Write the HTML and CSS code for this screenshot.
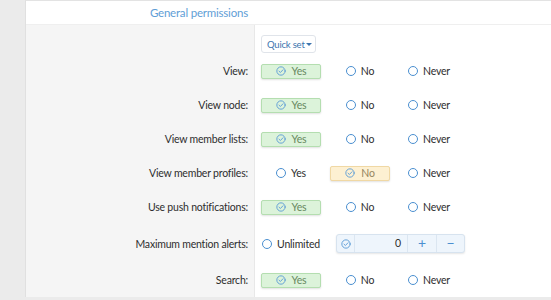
FILE: index.html
```html
<!DOCTYPE html>
<html lang="en">
<head>
  <meta charset="UTF-8" />
  <title>General permissions</title>
  <link rel="stylesheet" href="styles.css">
</head>
<body>

<div class="bloco">
  <!-- Cabeçalho do grupo -->
  <div class="cabecalho">
    <h3>General permissions</h3>
  </div>

  <!-- Quick set -->
  <div class="linha linha-quick">
    <div class="rotulo"></div>
    <div class="valor">
      <button class="btn-quick">Quick set<span class="seta"></span></button>
    </div>
  </div>

  <div class="linha">
    <div class="rotulo">View:</div>
    <div class="valor">
      <span class="opcao sim marcada"><svg class="ico-ok" viewBox="0 0 12 12"><circle cx="6" cy="6" r="5"/><path d="M3.6 6.2l1.7 1.6 3.1-3.3"/></svg>Yes</span>
      <span class="opcao"><i class="radio"></i>No</span>
      <span class="opcao"><i class="radio"></i>Never</span>
    </div>
  </div>

  <div class="linha">
    <div class="rotulo">View node:</div>
    <div class="valor">
      <span class="opcao sim marcada"><svg class="ico-ok" viewBox="0 0 12 12"><circle cx="6" cy="6" r="5"/><path d="M3.6 6.2l1.7 1.6 3.1-3.3"/></svg>Yes</span>
      <span class="opcao"><i class="radio"></i>No</span>
      <span class="opcao"><i class="radio"></i>Never</span>
    </div>
  </div>

  <div class="linha">
    <div class="rotulo">View member lists:</div>
    <div class="valor">
      <span class="opcao sim marcada"><svg class="ico-ok" viewBox="0 0 12 12"><circle cx="6" cy="6" r="5"/><path d="M3.6 6.2l1.7 1.6 3.1-3.3"/></svg>Yes</span>
      <span class="opcao"><i class="radio"></i>No</span>
      <span class="opcao"><i class="radio"></i>Never</span>
    </div>
  </div>

  <div class="linha">
    <div class="rotulo">View member profiles:</div>
    <div class="valor">
      <span class="opcao"><i class="radio"></i>Yes</span>
      <span class="opcao nao marcada"><svg class="ico-ok" viewBox="0 0 12 12"><circle cx="6" cy="6" r="5"/><path d="M3.6 6.2l1.7 1.6 3.1-3.3"/></svg>No</span>
      <span class="opcao"><i class="radio"></i>Never</span>
    </div>
  </div>

  <div class="linha">
    <div class="rotulo">Use push notifications:</div>
    <div class="valor">
      <span class="opcao sim marcada"><svg class="ico-ok" viewBox="0 0 12 12"><circle cx="6" cy="6" r="5"/><path d="M3.6 6.2l1.7 1.6 3.1-3.3"/></svg>Yes</span>
      <span class="opcao"><i class="radio"></i>No</span>
      <span class="opcao"><i class="radio"></i>Never</span>
    </div>
  </div>

  <div class="linha linha-alta">
    <div class="rotulo">Maximum mention alerts:</div>
    <div class="valor">
      <span class="opcao"><i class="radio"></i>Unlimited</span>
      <div class="grupo-numero">
        <span class="gn-ok"><svg class="ico-ok" viewBox="0 0 12 12"><circle cx="6" cy="6" r="5"/><path d="M3.6 6.2l1.7 1.6 3.1-3.3"/></svg></span>
        <span class="gn-valor">0</span>
        <span class="gn-btn">+</span>
        <span class="gn-btn gn-menos">&minus;</span>
      </div>
    </div>
  </div>

  <div class="linha">
    <div class="rotulo">Search:</div>
    <div class="valor">
      <span class="opcao sim marcada"><svg class="ico-ok" viewBox="0 0 12 12"><circle cx="6" cy="6" r="5"/><path d="M3.6 6.2l1.7 1.6 3.1-3.3"/></svg>Yes</span>
      <span class="opcao"><i class="radio"></i>No</span>
      <span class="opcao"><i class="radio"></i>Never</span>
    </div>
  </div>
</div>

</body>
</html>
```

FILE: styles.css
```css
/* Reset e fonte */
* {
  margin: 0;
  padding: 0;
  box-sizing: border-box;
}

body {
  background: #ebebeb;
  font-family: Lato, sans-serif;
  font-size: 10.5px;
  letter-spacing: -0.2px;
  color: #2e2e2e;
  overflow: hidden;
}

.bloco {
  margin-left: 25px;
  background: #fff;
  border-top: 1px solid #e3e3e3;
  border-left: 1px solid #e0e0e0;
}

/* Cabeçalho */
.cabecalho {
  display: flex;
  height: 24px;
  border-bottom: 1px solid #efefef;
}

.cabecalho h3 {
  width: 229px;
  text-align: right;
  padding-right: 7px;
  font-size: 11.5px;
  font-weight: normal;
  color: #5f9ed6;
  line-height: 23px;
}

/* Linhas do formulário */
.linha {
  display: flex;
  height: 34px;
}

.linha-quick {
  height: 29px;
}

.linha-alta {
  height: 39px;
}

.rotulo {
  width: 229px;
  flex-shrink: 0;
  background: #f5f5f5;
  border-right: 1px solid #e8e8e8;
  padding-right: 6px;
  display: flex;
  align-items: center;
  justify-content: flex-end;
  color: #2e2e2e;
}

.valor {
  display: flex;
  align-items: center;
  gap: 9px;
  padding-left: 6px;
}

.linha-quick .valor {
  align-items: flex-start;
  padding-top: 10px;
}

.btn-quick {
  background: #fff;
  border: 1px solid #e0e4ea;
  border-radius: 3px;
  height: 18px;
  padding: 0 3px 0 5px;
  font-family: Lato, sans-serif;
  font-size: 9.5px;
  letter-spacing: -0.2px;
  color: #3d74ae;
  display: flex;
  align-items: center;
}

.seta {
  display: inline-block;
  margin-left: 1px;
  border-left: 3px solid transparent;
  border-right: 3px solid transparent;
  border-top: 3.5px solid #3d74ae;
}

/* Opções de rádio */
.opcao {
  width: 60px;
  height: 15px;
  flex-shrink: 0;
  display: flex;
  align-items: center;
  justify-content: center;
  border: 1px solid transparent;
  border-radius: 2px;
}

.radio {
  display: inline-block;
  flex-shrink: 0;
  width: 10px;
  height: 10px;
  border: 1.2px solid #4a8fd0;
  border-radius: 50%;
  background: #fff;
  margin-right: 5px;
}

.ico-ok {
  flex-shrink: 0;
  width: 10px;
  height: 10px;
  margin-right: 6px;
  fill: none;
  stroke: #5b9bd5;
  stroke-width: 1.1;
  stroke-linecap: round;
  stroke-linejoin: round;
}

.marcada {
  box-shadow: 0 1px 2px rgba(0,0,0,0.12);
}

.sim {
  background: #dcf3da;
  border-color: #b4deb0;
  color: #67895f;
}

.nao {
  background: #fdf0d2;
  border-color: #f0d8a4;
  color: #958560;
}

.linha-alta .valor {
  gap: 15px;
}

/* Campo numérico */
.grupo-numero {
  display: flex;
  width: 129px;
  height: 19px;
  background: #eef5fc;
  border: 1px solid #d7e3ef;
  border-radius: 3px;
  box-shadow: 0 1px 2px rgba(0,0,0,0.1);
}

.gn-ok {
  width: 18px;
  display: flex;
  align-items: center;
  justify-content: center;
  border-right: 1px solid #dbe6f1;
}

.gn-ok .ico-ok {
  margin: 0;
}

.gn-valor {
  width: 52px;
  text-align: right;
  padding-right: 6px;
  line-height: 17px;
}

.gn-btn {
  width: 29px;
  text-align: center;
  line-height: 16px;
  font-size: 14px;
  color: #4a8fd0;
  border-left: 1px solid #dbe6f1;
}

.gn-menos {
  flex: 1;
}
```
